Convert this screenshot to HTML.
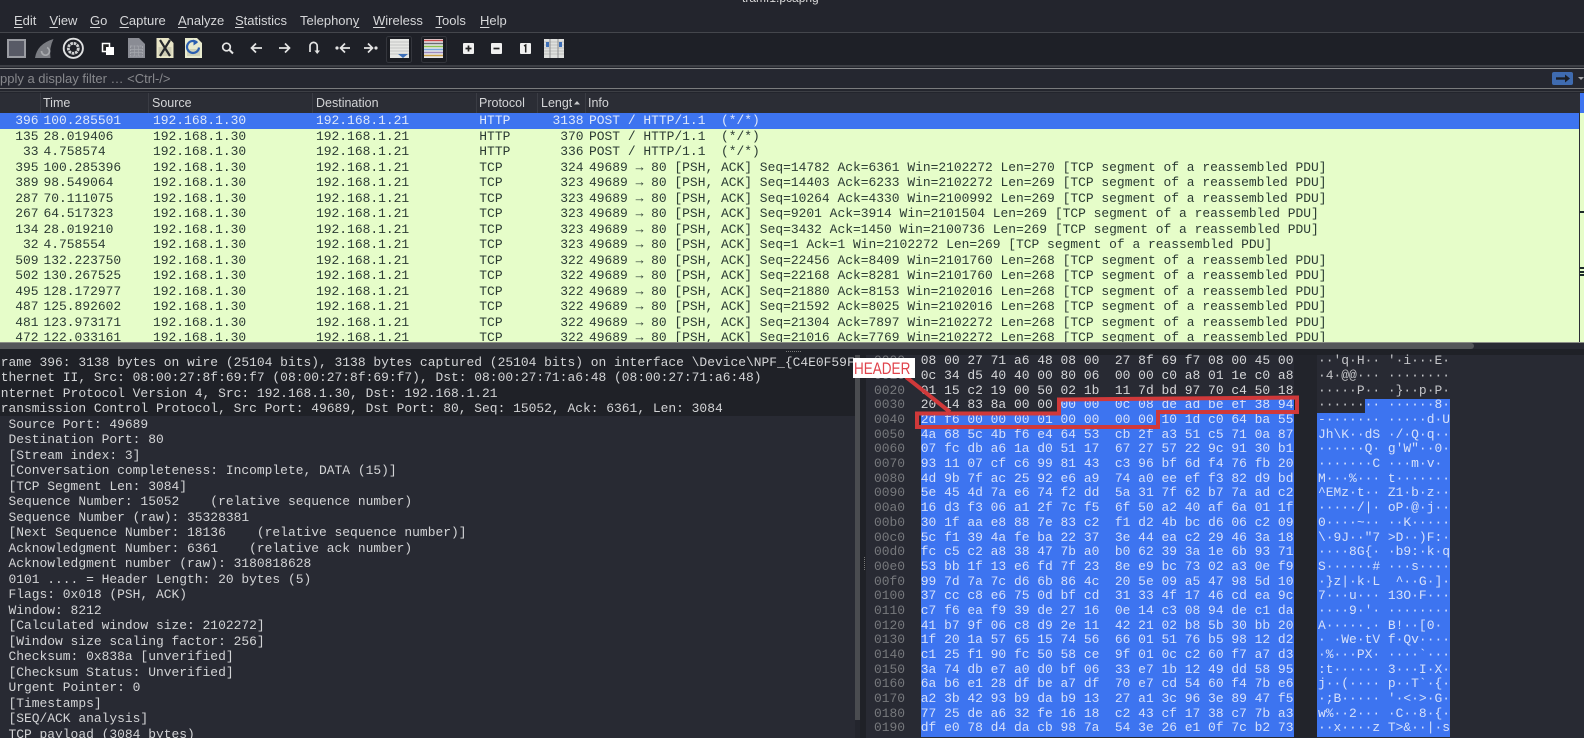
<!DOCTYPE html>
<html lang="en"><head><meta charset="utf-8"><title>Wireshark</title>
<style>
html,body{margin:0;padding:0;background:#23252d;}
#a{position:relative;width:1584px;height:738px;overflow:hidden;background:#23252d;font-family:"Liberation Sans",sans-serif;}
.abs{position:absolute;}
.m{position:absolute;top:13px;font-size:13px;line-height:16px;color:#d6d7d9;white-space:pre;}
.m u{text-underline-offset:2px;}
.h{position:absolute;top:94px;font-size:12.5px;line-height:18px;color:#d4d5d7;white-space:pre;}
.sep{position:absolute;top:93px;width:1px;height:20px;background:#3a3c44;}
.r{position:absolute;left:0;width:1579px;height:15.5px;font-family:"Liberation Mono",monospace;font-size:12.95px;line-height:15.5px;color:#2b3b33;white-space:pre;}
.r span{position:absolute;top:0;}
.sel{color:#dce6fb;background:#3d74f0;}
.n{right:1540.5px;}.t{left:43.5px;}.s{left:153px;}.d{left:316px;}.p{left:479.3px;}.l{right:995.5px;}.i{left:589px;}
pre{margin:0;font-family:"Liberation Mono",monospace;font-size:12.95px;position:absolute;}
svg{position:absolute;}
</style></head><body><div id="a">

<div class="abs" style="left:742px;top:-9px;font-size:12px;line-height:14px;color:#d8d8d8;">tramf1.pcapng</div>

<div class="m" style="left:14px;"><u>E</u>dit</div>
<div class="m" style="left:49.5px;"><u>V</u>iew</div>
<div class="m" style="left:90px;"><u>G</u>o</div>
<div class="m" style="left:119.5px;"><u>C</u>apture</div>
<div class="m" style="left:178px;"><u>A</u>nalyze</div>
<div class="m" style="left:235px;"><u>S</u>tatistics</div>
<div class="m" style="left:300px;">Telephon<u>y</u></div>
<div class="m" style="left:373px;"><u>W</u>ireless</div>
<div class="m" style="left:435.5px;"><u>T</u>ools</div>
<div class="m" style="left:480px;"><u>H</u>elp</div>

<div class="abs" style="left:0;top:32px;width:1584px;height:1px;background:#44464c;"></div>
<div class="abs" style="left:0;top:33px;width:1584px;height:33px;background:#1e2027;"></div>
<div class="abs" style="left:0;top:65px;width:1584px;height:2px;background:#3c3e44;"></div>

<svg style="left:0;top:33px;" width="600" height="33" viewBox="0 33 600 33">
  <rect x="8" y="40" width="17" height="17" fill="#585a66" stroke="#9a9ca2" stroke-width="2"/>
  <path d="M35 58 Q37 44 53.500 39 Q49 48 50.500 58Z" fill="#7a7c82"/>
  <path d="M41.500 51 a4 4 0 1 0 5.500 -3.500" fill="none" stroke="#a8aaae" stroke-width="1.700"/>
  <circle cx="73.300" cy="48.300" r="9.600" fill="none" stroke="#e0e1e2" stroke-width="1.900"/>
  <circle cx="73.300" cy="48.300" r="5" fill="none" stroke="#d0d1d2" stroke-width="2.800" stroke-dasharray="2.600 .8"/>
  <path d="M102.500 43.500h7v8h-7z" fill="#222" stroke="#fff" stroke-width="1.500"/>
  <path d="M106 47h8v8h-8z" fill="#fff"/>
  <path d="M128 38h11l6 6v14h-17z" fill="#8a8c94"/>
  <path d="M130.500 46h12v10h-12z" fill="none" stroke="#a4a6ac" stroke-width="1" stroke-dasharray="2 1"/>
  <path d="M130.500 49.500h12M130.500 52.500h12M134.500 46v10M138.500 46v10" stroke="#a4a6ac" stroke-width=".7"/>
  <path d="M156.500 38h12l5 5v15h-17z" fill="#e9e6c8"/>
  <path d="M158.500 47h13v9h-13z" fill="#cfcdb4"/>
  <path d="M160 40l10 16M170 40l-10 16" stroke="#26282c" stroke-width="2.200"/>
  <path d="M185 38h12l5 5v15h-17z" fill="#e9ebcf"/>
  <path d="M187 49h13v7h-13z" fill="#cfd2b8"/>
  <path d="M197 42.500a6 6 0 1 0 2 5" fill="none" stroke="#2b5fb0" stroke-width="2.200"/>
  <path d="M193.500 39.500l4.500 3-4.500 3z" fill="#2b5fb0"/>
  <circle cx="226.500" cy="47" r="3.800" fill="none" stroke="#e4e4e4" stroke-width="1.700"/>
  <path d="M229.500 50l3.500 3.500" stroke="#e4e4e4" stroke-width="2"/>
  <path d="M262 48h-10M256 43.500l-4.500 4.500 4.500 4.500" fill="none" stroke="#e4e4e4" stroke-width="1.700"/>
  <path d="M279 48h10M285 43.500l4.500 4.500-4.500 4.500" fill="none" stroke="#e4e4e4" stroke-width="1.700"/>
  <path d="M310 52v-6a3.600 3.600 0 0 1 7.200 0v6" fill="none" stroke="#e4e4e4" stroke-width="1.700"/>
  <path d="M314.500 50.500h5.500l-2.800 3.500z" fill="#e4e4e4"/>
  <circle cx="337" cy="48" r="1.600" fill="#e4e4e4"/>
  <path d="M350 48h-9M345 43.500l-4.500 4.500 4.500 4.500" fill="none" stroke="#e4e4e4" stroke-width="1.700"/>
  <circle cx="376" cy="48" r="1.600" fill="#e4e4e4"/>
  <path d="M364 48h9M368 43.500l4.500 4.500-4.500 4.500" fill="none" stroke="#e4e4e4" stroke-width="1.700"/>
  <rect x="386.500" y="36.500" width="25" height="26" rx="2" fill="#1b1d23" stroke="#34363d"/>
  <rect x="390" y="39" width="19" height="19" fill="#e6e7e4"/>
  <path d="M390 42h19M390 45h19M390 48h19M390 51h19M390 54h19" stroke="#c4c6c4" stroke-width="1"/>
  <path d="M398 54h10l-5 4z" fill="#3d6fb8"/>
  <rect x="421.500" y="36.500" width="25" height="26" rx="2" fill="#1b1d23" stroke="#34363d"/>
  <rect x="424" y="39" width="19" height="19" fill="#e8e8ea"/>
  <path d="M424 40.500h19" stroke="#c94a4a" stroke-width="1.400"/>
  <path d="M424 43.500h19" stroke="#6a6c72" stroke-width="1.400"/>
  <path d="M424 46.500h19" stroke="#8cc24e" stroke-width="1.400"/>
  <path d="M424 49.500h19" stroke="#74a7dc" stroke-width="1.400"/>
  <path d="M424 52.500h19" stroke="#9c8cc0" stroke-width="1.400"/>
  <path d="M424 55.500h19" stroke="#c8a24a" stroke-width="1.400"/>
  <rect x="463" y="43" width="11" height="11" rx="1" fill="#f0f0f0"/>
  <path d="M465.500 48.500h6M468.500 45.500v6" stroke="#222" stroke-width="1.700"/>
  <rect x="491" y="43" width="11" height="11" rx="1" fill="#f0f0f0"/>
  <path d="M493.500 48.500h6" stroke="#222" stroke-width="1.700"/>
  <rect x="520" y="43" width="11" height="11" rx="1" fill="#f0f0f0"/>
  <path d="M524 46l1.700-1v7.500" fill="none" stroke="#222" stroke-width="1.500"/>
  <rect x="544" y="39" width="20" height="19" fill="#dfe0de"/>
  <path d="M544 42h20M544 45h20M544 48h20M544 51h20M544 54h20" stroke="#bfc1bf" stroke-width="1"/>
  <path d="M550 39v19M558 39v19" stroke="#8c8e90" stroke-width="1"/>
  <path d="M546 42h3v5h-3zM559 42h3v5h-3z" fill="#3d6fb8"/>
</svg>

<div class="abs" style="left:0;top:68px;width:1584px;height:1px;background:#8a8b8d;"></div>
<div class="abs" style="left:0;top:69px;width:1584px;height:19px;background:#252730;"></div>
<div class="abs" style="left:0;top:88px;width:1584px;height:1px;background:#7a7b7d;"></div>
<div class="abs" style="left:0;top:71px;font-size:13px;line-height:16px;color:#87888c;white-space:pre;">pply a display filter … &lt;Ctrl-/&gt;</div>
<div class="abs" style="left:1552px;top:72px;width:21px;height:13px;background:#3f6bb0;border-radius:2px;"></div>
<svg style="left:1552px;top:72px;" width="32" height="13" viewBox="0 0 32 13">
  <path d="M4 6.500h10" stroke="#1c1f26" stroke-width="2.400"/><path d="M13 2.500l5 4-5 4z" fill="#1c1f26"/>
  <path d="M26 5h6l-3 3z" fill="#a8a9ac"/>
</svg>

<div class="abs" style="left:0;top:91px;width:1584px;height:1px;background:#3d3f45;"></div>
<div class="abs" style="left:0;top:93px;width:1579px;height:20px;background:#2b2d35;"></div>
<div class="sep" style="left:40px;"></div><div class="sep" style="left:148px;"></div><div class="sep" style="left:312px;"></div><div class="sep" style="left:476px;"></div><div class="sep" style="left:537px;"></div><div class="sep" style="left:585px;"></div>
<div class="h" style="left:43px;">Time</div>
<div class="h" style="left:152px;">Source</div>
<div class="h" style="left:316px;">Destination</div>
<div class="h" style="left:479px;">Protocol</div>
<div class="h" style="left:541px;width:31px;overflow:hidden;">Length</div>
<svg style="left:574px;top:100px;" width="8" height="6"><path d="M0 4.500l3-3.500 3 3.500z" fill="#c9cacc"/></svg>
<div class="h" style="left:588px;">Info</div>

<div class="abs" style="left:0;top:113px;width:1579px;height:229px;background:#e6fdc9;overflow:hidden;">
<div class="r sel" style="top:0;"><span class="n">396</span><span class="t">100.285501</span><span class="s">192.168.1.30</span><span class="d">192.168.1.21</span><span class="p">HTTP</span><span class="l">3138</span><span class="i">POST / HTTP/1.1  (*/*)</span></div>
<div class="r" style="top:15.5px;"><span class="n">135</span><span class="t">28.019406</span><span class="s">192.168.1.30</span><span class="d">192.168.1.21</span><span class="p">HTTP</span><span class="l">370</span><span class="i">POST / HTTP/1.1  (*/*)</span></div>
<div class="r" style="top:31px;"><span class="n">33</span><span class="t">4.758574</span><span class="s">192.168.1.30</span><span class="d">192.168.1.21</span><span class="p">HTTP</span><span class="l">336</span><span class="i">POST / HTTP/1.1  (*/*)</span></div>
<div class="r" style="top:46.5px;"><span class="n">395</span><span class="t">100.285396</span><span class="s">192.168.1.30</span><span class="d">192.168.1.21</span><span class="p">TCP</span><span class="l">324</span><span class="i">49689 → 80 [PSH, ACK] Seq=14782 Ack=6361 Win=2102272 Len=270 [TCP segment of a reassembled PDU]</span></div>
<div class="r" style="top:62px;"><span class="n">389</span><span class="t">98.549064</span><span class="s">192.168.1.30</span><span class="d">192.168.1.21</span><span class="p">TCP</span><span class="l">323</span><span class="i">49689 → 80 [PSH, ACK] Seq=14403 Ack=6233 Win=2102272 Len=269 [TCP segment of a reassembled PDU]</span></div>
<div class="r" style="top:77.5px;"><span class="n">287</span><span class="t">70.111075</span><span class="s">192.168.1.30</span><span class="d">192.168.1.21</span><span class="p">TCP</span><span class="l">323</span><span class="i">49689 → 80 [PSH, ACK] Seq=10264 Ack=4330 Win=2100992 Len=269 [TCP segment of a reassembled PDU]</span></div>
<div class="r" style="top:93px;"><span class="n">267</span><span class="t">64.517323</span><span class="s">192.168.1.30</span><span class="d">192.168.1.21</span><span class="p">TCP</span><span class="l">323</span><span class="i">49689 → 80 [PSH, ACK] Seq=9201 Ack=3914 Win=2101504 Len=269 [TCP segment of a reassembled PDU]</span></div>
<div class="r" style="top:108.5px;"><span class="n">134</span><span class="t">28.019210</span><span class="s">192.168.1.30</span><span class="d">192.168.1.21</span><span class="p">TCP</span><span class="l">323</span><span class="i">49689 → 80 [PSH, ACK] Seq=3432 Ack=1450 Win=2100736 Len=269 [TCP segment of a reassembled PDU]</span></div>
<div class="r" style="top:124px;"><span class="n">32</span><span class="t">4.758554</span><span class="s">192.168.1.30</span><span class="d">192.168.1.21</span><span class="p">TCP</span><span class="l">323</span><span class="i">49689 → 80 [PSH, ACK] Seq=1 Ack=1 Win=2102272 Len=269 [TCP segment of a reassembled PDU]</span></div>
<div class="r" style="top:139.5px;"><span class="n">509</span><span class="t">132.223750</span><span class="s">192.168.1.30</span><span class="d">192.168.1.21</span><span class="p">TCP</span><span class="l">322</span><span class="i">49689 → 80 [PSH, ACK] Seq=22456 Ack=8409 Win=2101760 Len=268 [TCP segment of a reassembled PDU]</span></div>
<div class="r" style="top:155px;"><span class="n">502</span><span class="t">130.267525</span><span class="s">192.168.1.30</span><span class="d">192.168.1.21</span><span class="p">TCP</span><span class="l">322</span><span class="i">49689 → 80 [PSH, ACK] Seq=22168 Ack=8281 Win=2101760 Len=268 [TCP segment of a reassembled PDU]</span></div>
<div class="r" style="top:170.5px;"><span class="n">495</span><span class="t">128.172977</span><span class="s">192.168.1.30</span><span class="d">192.168.1.21</span><span class="p">TCP</span><span class="l">322</span><span class="i">49689 → 80 [PSH, ACK] Seq=21880 Ack=8153 Win=2102016 Len=268 [TCP segment of a reassembled PDU]</span></div>
<div class="r" style="top:186px;"><span class="n">487</span><span class="t">125.892602</span><span class="s">192.168.1.30</span><span class="d">192.168.1.21</span><span class="p">TCP</span><span class="l">322</span><span class="i">49689 → 80 [PSH, ACK] Seq=21592 Ack=8025 Win=2102016 Len=268 [TCP segment of a reassembled PDU]</span></div>
<div class="r" style="top:201.5px;"><span class="n">481</span><span class="t">123.973171</span><span class="s">192.168.1.30</span><span class="d">192.168.1.21</span><span class="p">TCP</span><span class="l">322</span><span class="i">49689 → 80 [PSH, ACK] Seq=21304 Ack=7897 Win=2102272 Len=268 [TCP segment of a reassembled PDU]</span></div>
<div class="r" style="top:217px;"><span class="n">472</span><span class="t">122.033161</span><span class="s">192.168.1.30</span><span class="d">192.168.1.21</span><span class="p">TCP</span><span class="l">322</span><span class="i">49689 → 80 [PSH, ACK] Seq=21016 Ack=7769 Win=2102272 Len=268 [TCP segment of a reassembled PDU]</span></div>
</div>

<div class="abs" style="left:1579px;top:93px;width:1px;height:249px;background:#2b2d35;"></div>
<div class="abs" style="left:1580px;top:93px;width:4px;height:249px;background:#e6fdc9;"></div>
<div class="abs" style="left:1580px;top:93px;width:4px;height:20px;background:#3d74f0;"></div>
<div class="abs" style="left:1580px;top:211px;width:4px;height:2px;background:#1c2a2a;"></div>
<div class="abs" style="left:1580px;top:267px;width:4px;height:2px;background:#1c2a2a;"></div>
<div class="abs" style="left:1580px;top:271px;width:4px;height:2px;background:#1c2a2a;"></div>
<div class="abs" style="left:1580px;top:274px;width:4px;height:2px;background:#1c2a2a;"></div>

<div class="abs" style="left:0;top:342px;width:1584px;height:1px;background:#8b8e86;"></div>
<div class="abs" style="left:0;top:343px;width:1584px;height:6px;background:#292b33;"></div>
<div class="abs" style="left:0;top:343px;width:1474px;height:6px;background:#55575a;border-radius:0 3px 3px 0;"></div>
<div class="abs" style="left:0;top:349px;width:1584px;height:6px;background:#1f2127;"></div>
<div class="abs" style="left:786px;top:351px;width:16px;height:1px;background:repeating-linear-gradient(90deg,#777 0 1px,transparent 1px 2px);"></div>

<!-- details pane -->
<div class="abs" style="left:0;top:355px;width:855px;height:383px;background:#282a33;"></div>
<div class="abs" style="left:0;top:355px;width:855px;height:61px;background:#1f2127;"></div>
<pre style="left:0.7px;top:354.500px;width:854px;height:384px;overflow:hidden;line-height:15.5px;color:#d3d4d6;">rame 396: 3138 bytes on wire (25104 bits), 3138 bytes captured (25104 bits) on interface \Device\NPF_{C4E0F59F
thernet II, Src: 08:00:27:8f:69:f7 (08:00:27:8f:69:f7), Dst: 08:00:27:71:a6:48 (08:00:27:71:a6:48)
nternet Protocol Version 4, Src: 192.168.1.30, Dst: 192.168.1.21
ransmission Control Protocol, Src Port: 49689, Dst Port: 80, Seq: 15052, Ack: 6361, Len: 3084
 Source Port: 49689
 Destination Port: 80
 [Stream index: 3]
 [Conversation completeness: Incomplete, DATA (15)]
 [TCP Segment Len: 3084]
 Sequence Number: 15052    (relative sequence number)
 Sequence Number (raw): 35328381
 [Next Sequence Number: 18136    (relative sequence number)]
 Acknowledgment Number: 6361    (relative ack number)
 Acknowledgment number (raw): 3180818628
 0101 .... = Header Length: 20 bytes (5)
 Flags: 0x018 (PSH, ACK)
 Window: 8212
 [Calculated window size: 2102272]
 [Window size scaling factor: 256]
 Checksum: 0x838a [unverified]
 [Checksum Status: Unverified]
 Urgent Pointer: 0
 [Timestamps]
 [SEQ/ACK analysis]
 TCP payload (3084 bytes)</pre>

<div class="abs" style="left:855px;top:355px;width:5px;height:365px;background:#4a4c50;"></div>
<div class="abs" style="left:860px;top:355px;width:6px;height:383px;background:#1f2127;"></div>
<div class="abs" style="left:864px;top:557px;width:1px;height:14px;background:repeating-linear-gradient(180deg,#777 0 1px,transparent 1px 2px);"></div>

<!-- hex pane -->
<div class="abs" style="left:866px;top:355px;width:718px;height:383px;background:#282a33;"></div>
<div class="abs" style="left:1294px;top:355px;width:23px;height:383px;background:#22242b;"></div>
<div class="abs" style="left:1059px;top:398.600px;width:235px;height:14.700px;background:#3d74f0;"></div>
<div class="abs" style="left:920.600px;top:413.300px;width:373.400px;height:323.500px;background:#3d74f0;"></div>
<div class="abs" style="left:1364.500px;top:398.600px;width:85.500px;height:14.700px;background:#3d74f0;"></div>
<div class="abs" style="left:1317.300px;top:413.300px;width:132.700px;height:323.500px;background:#3d74f0;"></div>

<pre style="left:874px;top:354.300px;line-height:14.68px;color:#77797d;">0000
0010
0020
0030
0040
0050
0060
0070
0080
0090
00a0
00b0
00c0
00d0
00e0
00f0
0100
0110
0120
0130
0140
0150
0160
0170
0180
0190</pre>

<pre style="left:920.800px;top:354.300px;line-height:14.68px;color:#d6d7d9;">08 00 27 71 a6 48 08 00  27 8f 69 f7 08 00 45 00
0c 34 d5 40 40 00 80 06  00 00 c0 a8 01 1e c0 a8
01 15 c2 19 00 50 02 1b  11 7d bd 97 70 c4 50 18
20 14 83 8a 00 00</pre>
<pre style="left:920.800px;top:398.340px;line-height:14.68px;color:#d5e0fb;">                  00 00  0c 08 de ad be ef 38 94
2d f6 00 00 00 01 00 00  00 00 10 1d c0 64 ba 55
4a 68 5c 4b f6 e4 64 53  cb 2f a3 51 c5 71 0a 87
07 fc db a6 1a d0 51 17  67 27 57 22 9c 91 30 b1
93 11 07 cf c6 99 81 43  c3 96 bf 6d f4 76 fb 20
4d 9b 7f ac 25 92 e6 a9  74 a0 ee ef f3 82 d9 bd
5e 45 4d 7a e6 74 f2 dd  5a 31 7f 62 b7 7a ad c2
16 d3 f3 06 a1 2f 7c f5  6f 50 a2 40 af 6a 01 1f
30 1f aa e8 88 7e 83 c2  f1 d2 4b bc d6 06 c2 09
5c f1 39 4a fe ba 22 37  3e 44 ea c2 29 46 3a 18
fc c5 c2 a8 38 47 7b a0  b0 62 39 3a 1e 6b 93 71
53 bb 1f 13 e6 fd 7f 23  8e e9 bc 73 02 a3 0e f9
99 7d 7a 7c d6 6b 86 4c  20 5e 09 a5 47 98 5d 10
37 cc c8 e6 75 0d bf cd  31 33 4f 17 46 cd ea 9c
c7 f6 ea f9 39 de 27 16  0e 14 c3 08 94 de c1 da
41 b7 9f 06 c8 d9 2e 11  42 21 02 b8 5b 30 bb 20
1f 20 1a 57 65 15 74 56  66 01 51 76 b5 98 12 d2
c1 25 f1 90 fc 50 58 ce  9f 01 0c c2 60 f7 a7 d3
3a 74 db e7 a0 d0 bf 06  33 e7 1b 12 49 dd 58 95
6a b6 e1 28 df be a7 df  70 e7 cd 54 60 f4 7b e6
a2 3b 42 93 b9 da b9 13  27 a1 3c 96 3e 89 47 f5
77 25 de a6 32 fe 16 18  c2 43 cf 17 38 c7 7b a3
df e0 78 d4 da cb 98 7a  54 3e 26 e1 0f 7c b2 73</pre>

<pre style="left:1318px;top:354.300px;line-height:14.68px;color:#c4c5c8;">··'q·H·· '·i···E·
·4·@@··· ········
·····P·· ·}··p·P·
······</pre>
<pre style="left:1318px;top:398.340px;line-height:14.68px;color:#d5e0fb;">      ·· ······8·
-······· ·····d·U
Jh\K··dS ·/·Q·q··
······Q· g'W"··0·
·······C ···m·v· 
M···%··· t·······
^EMz·t·· Z1·b·z··
·····/|· oP·@·j··
0····~·· ··K·····
\·9J··"7 >D··)F:·
····8G{· ·b9:·k·q
S······# ···s····
·}z|·k·L  ^··G·]·
7···u··· 13O·F···
····9·'· ········
A·····.· B!··[0· 
· ·We·tV f·Qv····
·%···PX· ····`···
:t······ 3···I·X·
j··(···· p··T`·{·
·;B····· '·&lt;·&gt;·G·
w%··2··· ·C··8·{·
··x····z T&gt;&amp;··|·s</pre>

<!-- annotation -->
<svg style="left:0;top:0;" width="1584" height="738" viewBox="0 0 1584 738">
  <path d="M1059 399.500L1297 397.500V412H1158V427H917V413.500H1059Z" fill="none" stroke="#d0393a" stroke-width="4"/>
  <path d="M906 377L950 412" stroke="#d0393a" stroke-width="4"/>
</svg>
<div class="abs" style="left:853px;top:358px;width:62px;height:20px;background:#fff;"></div>
<div class="abs" style="left:854px;top:358px;height:20px;font-size:16.700px;line-height:21px;color:#e0434c;white-space:pre;transform-origin:0 0;transform:scaleX(.81);">HEADER</div>

</div></body></html>
